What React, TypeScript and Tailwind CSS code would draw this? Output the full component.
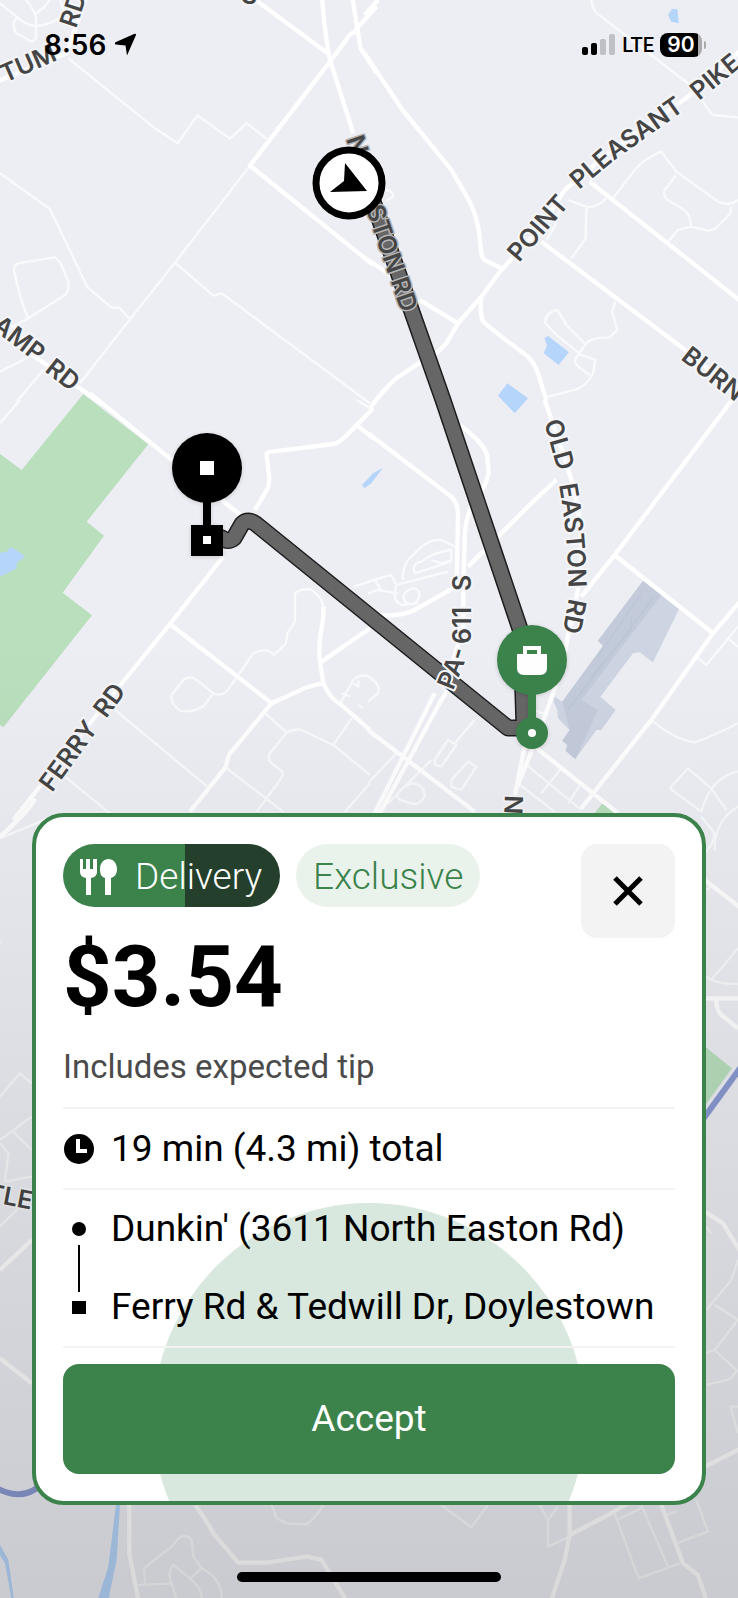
import { Fragment } from "react";

type Tile = {
  x: number;
  y: number;
  major?: string;
  minor?: string;
  park?: string;
  water?: string;
  highway?: string;
};

// Every tile is drawn at three units per pixel and scaled down when rendered.
const TILES: Tile[] = [
  {
    x: 0,
    y: 0,
    major:
      "M740-20 990 165 M965-20C972 60 975 110 990 180L1060 400 M1055-20 1082 145 1130 220 M1130 20 1080 75 1062 98Q1050 100 1040 118L990 185 750 497 1120 795 M-10 245 200 160 260-10 M-30 975 310 1215",
    minor:
      "M750 497 525 788 390 958 240 1150 M205 175 465 385 533 430 592 346 690 416 740 370 800 416 M0 520 150 627 262 862 335 923H358L390 958 M85 955C60 900 50 850 42 810Q42 790 65 788L165 772 182 790 205 845V870L195 885Z M85 955 0 1000 M525 788 640 887 665 880 1110 1210 M0 10 50 50C80 80 110 80 130 75 170 65 190 50 205 25 M70-10C95 20 105 35 108 55V115Q100 130 85 120L50 100Q38 85 42 65L50 55 M108 40Q140 20 150-5 M180 0 190 30 M0 1115 80 1075 M130 1110 50 1205",
  },
  {
    x: 368,
    y: 0,
    major:
      "M-10 160 100 325 250 510C290 580 320 620 330 680 340 730 335 770 350 780L400 805 M5 1225Q70 1140 100 1125L160 1085 205 1060 235 1030 270 970 340 890 400 810 520 680 590 570 720 460 960 290 1120 150 M340 890Q335 940 345 965L400 1010 480 1070Q500 1090 510 1120L535 1200 M0 780 75 830 M155 900 270 970 M520 725 945 1045 1120 1190 M665 545 1120 905 M30 0-10 45",
    minor:
      "M670-10Q670 35 700 50L850 165 960 250 1035 345 1110 352 M735 595 800 510Q830 475 880 455L925 515 1050 605Q1085 620 1110 600 M925 525 890 570Q885 590 900 600L950 630Q970 650 968 680L1020 692Q1040 690 1050 678L1088 640V620 M968 680 930 690 900 725 M600 600 660 622Q690 620 715 595 M655 625 653 715 610 775 M535 720 560 680 575 630 M650 1030 595 975 568 930Q530 940 532 970L560 1000 640 1065 M620 1080 655 1030Q670 1012 725 1012L748 990 732 935 742 905 M620 1080 625 1095 665 1125 M630 1062 682 1080 675 1120Q655 1160 620 1170L540 1190 M40 570Q80 570 75 590L55 602",
    water:
      "M530 1015 540 1008 603 1057 572 1095 527 1060 537 1037Z M900 45 912 27H928L933 70 910 65Z M418 1150 480 1195 440 1240 390 1187Z",
  },
  {
    x: 0,
    y: 400,
    park: "M250-18 285 10 445 133 260 365 312 407 188 578 276 646 10 982-20 960V145L0 162 65 210Z",
    water: "M0 458 22 455 30 442 50 450 75 470 50 490V505L0 530Z",
    major:
      "M270-20 540 200 740 360 M765 330 805 262 808 235 800 165Q800 155 815 155L1000 132Q1020 130 1070 75L1120 25 M1070 75 1120 115 M670 470 510 672 365 850 40 1260 M510 672 815 910 920 862 965 850 M815 910 690 1060Q680 1080 678 1100L570 1235 M1110 685 965 785 M970 620C975 680 950 700 960 785L970 850C990 890 1000 900 1020 912L1110 990",
    minor:
      "M970 620Q968 590 930 567 900 568 885 578V665L862 700 858 730 822 765Q800 740 760 760L715 825 680 875Q660 890 640 880L590 840Q570 825 550 840L515 885Q510 910 540 932 570 940 610 920L640 880 M345 930 620 1158 M790 935 860 998Q880 985 905 990L1000 1035 1110 1125 M860 998 810 1060Q800 1075 815 1090L848 1115Q850 1130 840 1140L770 1235 M680 1105 850 1235 M1110 1150 1035 1235 M1055 955 1000 1035 M1020 912 1060 840Q1080 820 1110 830 M1060 850 1075 860V840 M1025 880 1050 890 M1075 915 1090 925 M60 0 0 70 M195 1130 330 1240 M1060 560 1110 545 M1070 0 1110 25",
  },
  {
    x: 368,
    y: 400,
    water: "M-18 255-10 265 10 250 45 203 15 220Z",
    park: "M705 1208 745 1245H675Z",
    major:
      "M0 100 250 290Q270 310 270 340L266 560 M275 75Q350 130 358 170L362 220Q350 270 320 300 290 350 290 420L286 560V680L230 870 M300 500 390 410 500 300 565 240 M30 645Q100 650 140 630L300 540 M530 0C600 200 640 300 640 450 640 600 590 700 590 780L520 980 440 1180 M1100-10 740 465 640 590 M740 465 1035 700 M1120 600 1035 700 850 960 640 1225 M500 1040 750 1240 M240 870 220 900 30 1250 M200 880 20 1240 M0 990 320 1235 M470 1040 440 1190",
    minor:
      "M850 960Q920 1020 980 1027 1010 1020 1110 970 M985 770 1015 795 1110 680 M1080 715 1110 740 M320 960 260 1030 M240 1020 200 1080V1095L220 1100 265 1035Z M300 1085 250 1140V1160L280 1170 325 1100Z M95 1200Q70 1180 130 1150 170 1150 170 1190 150 1220 130 1210Z M0 1150 85 1060 M60 1210 190 1080 M470 1090 640 1230 M450 1150 560 1235 M580 1105 520 1180 M640 1150 600 1210 M905 1165 960 1105 1030 1165 1075 1230 M905 1165 1000 1235 M1000 1235Q1030 1130 1110 1115 M500 930 525 940 M0 830Q40 850 30 880L0 905 M105 540Q100 490 140 460 180 415 220 420L260 440 M140 520Q130 490 160 485 200 455 250 450V480L220 490 190 480 M140 520 250 485 M0 545 70 525 85 555 240 515 M20 540 40 570 M0 580 30 570 90 580 M85 555Q70 600 100 615L150 610 M110 580Q140 550 155 580 150 620 120 610 100 600 110 580",
  },
  {
    x: 0,
    y: 800,
    major: "M105-5Q90 30 0 110",
    minor:
      "M0 115 180 40 M0 890 60 820 95 850 M0 1020 95 950 M40 995 95 1050 M0 1030 25 1060 15 1145 95 1130 M0 428H4",
  },
  {
    x: 368,
    y: 800,
    major: "M1010 240 1120 325 M1010 595H1120 M1045 600Q1045 630 1060 645L1110 685",
    minor:
      "M1030 540 1110 445 M1015 530Q1040 552 1110 552 M1110 20Q1040 60 1040 150 M1000 50 1040 100 1035 125 1015 155 M1015 270 1030 260",
    park: "M1005 735 1092 805 1005 925Z",
    highway: "M1120 800 1005 958",
  },
  {
    x: 0,
    y: 1190,
    major:
      "M0 240 95 150 M0 505 95 580 M388 945V1090L415 1230 M585 945Q620 990 640 1030L715 1118H800L920 1100 965 1110 1035 1225",
    minor:
      "M0 110 60 50 M435 1180 432 1135 520 1065Q550 1020 575 1050L580 1100 605 1135 570 1165 520 1125Q500 1145 515 1180L530 1230 M415 1185 515 1180 M605 1135Q670 1170 665 1230 M570 1165Q610 1200 605 1230 M815 945 830 985 860 1000 920 1003Q950 980 970 945",
    water: "M348 945H360L350 1110 325 1230H293L325 1130Z M0 1065 25 1110 42 1230H35L15 1120 0 1095Z",
    highway: "M-5 897Q60 930 110 895",
  },
  {
    x: 368,
    y: 1190,
    major:
      "M605 945V1035L590 1110 550 1230 M605 1035 720 975 780 940 M880 945 945 1120 990 1155 1015 1230 M1010 830 1120 775 M1010 65 1065 100 1120 190",
    minor:
      "M220 945 310 1012 360 945 M515 945 540 990V1070L605 1040 M740 970 812 1165 935 1120 M820 945 900 1130 M745 990 820 955 M925 1060 1020 1025 985 930 M1030 130 1015 110 M1110 210 1090 270 1015 360 M1040 345 1110 390 1040 480 1010 490 M1040 480 1110 545 M1015 585 1085 568 1110 540 M1110 650H1088L1110 730 M540 990 570 950 M895 975 925 965",
  },
];

const AIRPORT =
  "M825 543 933 628 855 787 815 757 795 760 697 890 743 930 700 990H685L622 1077 593 1052 598 1035 583 1022 605 990 570 955 568 930 557 905 560 890 583 905 705 738 690 722Z";

// Street names, one baseline path per word so that they follow the road.
const LABELS = [
  { id: "tum", text: "TUM", d: "M5 83 60 59" },
  { id: "tum-rd", text: "RD", d: "M76 29 92-20" },
  { id: "top", text: "S", d: "M240 2 260 6" },
  { id: "point", text: "POINT", d: "M519 263 544 234 584 188" },
  { id: "pleasant", text: "PLEASANT", d: "M579 190 612 162 700 99" },
  { id: "pike", text: "PIKE", d: "M699 101 771 42" },
  { id: "burn", text: "BURN", d: "M680 359 770 429" },
  { id: "camp", text: "AMP", d: "M-9 328 56 378" },
  { id: "camp-rd", text: "RD", d: "M44 371 89 406" },
  { id: "old", text: "OLD", d: "M544 422 562 486" },
  { id: "easton", text: "EASTON", d: "M559 485Q569 540 569 612" },
  { id: "old-rd", text: "RD", d: "M569 598 560 645" },
  { id: "pa", text: "PA-", d: "M453 691 464 664Q471 650 471 620" },
  { id: "pa-611", text: "611", d: "M471 644V560" },
  { id: "pa-s", text: "S", d: "M471 591V560" },
  { id: "n", text: "N", d: "M505 795 503 840" },
  { id: "ferry", text: "FERRY", d: "M52 793 110 713" },
  { id: "ferry-rd", text: "RD", d: "M106 719 145 667" },
  { id: "tle", text: "TLE", d: "M-14 1201 50 1213" },
];

const EASTON_LABELS = [
  { id: "n-easton", text: "N", d: "M346 139 360 180" },
  { id: "easton-rd", text: "EASTON RD", d: "M355 177 410 338" },
];

const ROUTE = "M362 170 443 400 521 632 524 728H508L256 524Q248 518 242 524L234 538Q228 543 222 538L207 536";

function MapLabel({ id, text, d }: { id: string; text: string; d: string }) {
  return (
    <>
      <path id={`label-${id}`} d={d} fill="none" stroke="none" />
      <text>
        <textPath href={`#label-${id}`}>{text}</textPath>
      </text>
    </>
  );
}

function RouteMap() {
  return (
    <svg
      aria-label="Route map"
      className="absolute inset-0 -z-20 h-full w-full bg-[#edeef4]"
      preserveAspectRatio="xMidYMin slice"
      role="img"
      viewBox="0 0 738 1598"
    >
      {TILES.map((tile) => (
        <g
          fill="none"
          key={`${tile.x}-${tile.y}`}
          strokeLinejoin="round"
          transform={`translate(${tile.x} ${tile.y}) scale(0.3333)`}
        >
          <path d={tile.park} fill="#b9dfbd" />
          <path d={tile.water} fill="#b5d5fb" />
          <path d={tile.minor} stroke="#f9fafc" strokeWidth="7" />
          <path d={tile.major} stroke="#fff" strokeWidth="13" />
          <path d={tile.highway} stroke="#8b9bd2" strokeWidth="18" />
        </g>
      ))}

      <g transform="translate(368 400) scale(0.3333)">
        <path d={AIRPORT} fill="#cdd4e2" />
        <path
          d="M825 543 880 586 640 900 690 930 622 1077 593 1052 598 1035 583 1022 605 990 583 905 705 738 690 722Z"
          fill="#c3cbdb"
        />
        <path d="M855 595 600 930 M820 580 690 770 M790 650V690L670 830" fill="none" stroke="#bcc5d6" strokeWidth="4" />
      </g>

      <path d={ROUTE} fill="none" stroke="#1d1d1d" strokeLinejoin="round" strokeWidth="17" />
      <path d={ROUTE} fill="none" stroke="#666" strokeLinejoin="round" strokeWidth="14" />

      <g
        className="font-[Inter,sans-serif] text-[25px] font-semibold"
        fill="#454545"
        paintOrder="stroke"
        stroke="#f4f5f8"
        strokeLinejoin="round"
        strokeWidth="4"
      >
        {LABELS.map((label) => (
          <Fragment key={label.id}>
            <MapLabel {...label} />
          </Fragment>
        ))}
        <g stroke="#b5b5b5" strokeWidth="3">
          {EASTON_LABELS.map((label) => (
            <Fragment key={label.id}>
              <MapLabel {...label} />
            </Fragment>
          ))}
        </g>
      </g>

      {/* current position */}
      <circle cx="349" cy="183" fill="#fff" r="33" stroke="#000" strokeWidth="7" />
      <path d="M345 163 367 191 330 192 344 181Z" />

      {/* drop-off */}
      <g className="drop-shadow-sm">
        <circle cx="207" cy="468" r="35" />
        <path d="M203 500h8v26h-8z M191 525h32v31h-32z" />
        <path d="M200 461h14v14h-14z M203 536h8v8h-8z" fill="#fff" />
      </g>

      {/* pickup */}
      <g className="drop-shadow-sm" fill="#3b824b">
        <circle cx="532" cy="660" r="35" />
        <path d="M528 690h8v32h-8z" />
        <circle cx="532" cy="733" r="16" />
        <circle cx="532" cy="733" fill="#fff" r="4" />
        <path
          d="M523 646h18v8h6v14q0 7-7 7h-16q-7 0-7-7v-14h6z M527 650v4h10v-4z"
          fill="#fff"
          fillRule="evenodd"
        />
      </g>
    </svg>
  );
}

function StatusBar() {
  return (
    <header className="flex h-[90px] items-center justify-between pr-8 pl-11">
      <div className="flex items-center gap-2 font-[Inter,sans-serif] text-[28px] leading-8 font-semibold">
        <time>8:56</time>
        <svg aria-label="Location in use" className="size-6" viewBox="0 0 24 24">
          <path d="M22 2 13 22.500 11.500 12.500 1.500 11.500Q0 10 2 9L20 1Q22 0 22 2Z" />
        </svg>
      </div>
      <div className="flex items-center gap-1.5">
        <svg aria-label="Signal strength" className="h-6 w-[34px]" viewBox="0 0 34 24">
          <rect height="8" rx="2" width="6" y="14" />
          <rect height="12" rx="2" width="6" x="9" y="10" />
          <rect fill="#bfc0c5" height="16" rx="2" width="6" x="18" y="6" />
          <rect fill="#bfc0c5" height="21" rx="2" width="6" x="27" y="1" />
        </svg>
        <span className="text-xl font-medium">LTE</span>
        <div className="flex items-center gap-0.5">
          <span className="flex h-6 w-[42px] items-center justify-center rounded-lg bg-linear-to-r from-black from-90% to-[#aaa] to-90% font-[Inter,sans-serif] text-[21px] font-semibold text-white">
            90
          </span>
          <span className="h-2 w-0.5 rounded-r bg-[#aaa]" />
        </div>
      </div>
    </header>
  );
}

function CutleryIcon() {
  return (
    <svg aria-hidden="true" className="h-9 w-[37px] fill-white" viewBox="0 0 37 36">
      <path d="M0 0h3v10h3V0h4v10h3V0h4v13q0 5-6 6v17H6V19q-6-1-6-6z" />
      <path d="M28.500 0C33 0 37 4 37 10s-3 8-6 9v17h-6V19c-3-1-5-3-5-9s4-10 8.500-10z" />
    </svg>
  );
}

function ClockIcon() {
  return (
    <svg aria-hidden="true" className="size-8" viewBox="0 0 32 32">
      <circle cx="16" cy="16" r="15" />
      <path d="M15 6v12h9" fill="none" stroke="#fff" strokeWidth="4" />
    </svg>
  );
}

function OfferCard() {
  return (
    <article className="relative isolate mx-8 mt-auto overflow-hidden rounded-[32px] border-4 border-[#3b824b] bg-white p-[27px]">
      <div className="flex items-start justify-between border-b-2 border-[#f3f3f3] pb-[18px]">
        <div className="flex flex-col gap-5">
          <div className="flex gap-4 text-[37px] font-light">
            <span className="flex h-[63px] items-center gap-[18px] rounded-full bg-linear-to-r from-[#3b824b] from-56% to-[#24402d] to-56% pt-0.5 pr-[18px] pl-[17px] text-white">
              <CutleryIcon />
              Delivery
            </span>
            <span className="flex h-[63px] items-center rounded-full bg-[#e9f3ec] px-[17px] pt-0.5 text-[#3b824b]">
              Exclusive
            </span>
          </div>
          <h1 className="pt-0.5 text-[85px] leading-24 font-bold">$3.54</h1>
          <p className="text-[33px] leading-11 text-[#4b4b4b]">Includes expected tip</p>
        </div>
        <button
          aria-label="Decline"
          className="flex size-[94px] items-center justify-center rounded-2xl bg-[#f3f3f3]"
          type="button"
        >
          <svg aria-hidden="true" className="size-8" viewBox="0 0 32 32">
            <path d="M3 3 29 29 M29 3 3 29" stroke="#000" strokeWidth="5" />
          </svg>
        </button>
      </div>

      <p className="flex h-[81px] items-center gap-4 border-b-2 border-[#f3f3f3] text-[37px]">
        <ClockIcon />
        19 min (4.3 mi) total
      </p>

      <div className="flex gap-4 border-b-2 border-[#f3f3f3]">
        <svg aria-hidden="true" className="h-[156px] w-8" viewBox="0 0 32 156">
          <circle cx="16" cy="39" r="7" />
          <path d="M15 55h2v47h-2z M9 111h14v13H9z" />
        </svg>
        <ol className="text-[37px] leading-[78px]">
          <li>Dunkin' (3611 North Easton Rd)</li>
          <li>Ferry Rd &amp; Tedwill Dr, Doylestown</li>
        </ol>
      </div>

      <div className="relative mt-4">
        <span className="absolute top-1/2 left-1/2 -z-10 size-[432px] -translate-1/2 rounded-full bg-[#d8e8de]" />
        <button
          className="h-[110px] w-full rounded-2xl bg-[#3b824b] text-[37px] text-white"
          type="button"
        >
          Accept
        </button>
      </div>
    </article>
  );
}

export default function App() {
  return (
    <main className="relative isolate flex min-h-screen flex-col overflow-hidden font-[Roboto,sans-serif] text-black">
      <RouteMap />
      <div className="absolute inset-0 -z-10 bg-linear-to-b from-transparent from-40% to-black/15" />
      <StatusBar />
      <OfferCard />
      <div className="mx-auto mt-[67px] mb-4 h-2.5 w-[264px] rounded-full bg-black" />
    </main>
  );
}
